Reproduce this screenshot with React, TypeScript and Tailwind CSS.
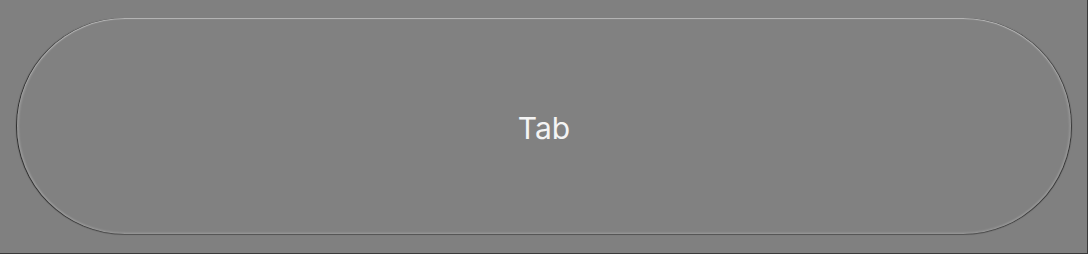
export default function App() {
  return (
    <div className="flex h-[254px] w-[1088px] border-b border-r border-[#3a3a3a] bg-[#808080] pb-[19px] pl-[17px] pr-[16px] pt-[18px]">
      <button
        type="button"
        className="flex flex-1 items-center justify-center rounded-full bg-[#818181] pt-[3px] text-[30px] leading-none text-[#f4f4f4] shadow-[inset_0_1px_1px_rgba(255,255,255,0.4),inset_2px_0_2px_rgba(255,255,255,0.15),inset_-2px_0_2px_rgba(255,255,255,0.12),inset_0_-2px_2px_rgba(255,255,255,0.1),-1px_0_1px_rgba(0,0,0,0.7),1px_0_1px_rgba(0,0,0,0.6),0_1px_1px_rgba(0,0,0,0.25),0_-1px_0_rgba(255,255,255,0.15)]"
        style={{ fontFamily: "Inter, 'Liberation Sans', sans-serif" }}
      >
        Tab
      </button>
    </div>
  );
}
